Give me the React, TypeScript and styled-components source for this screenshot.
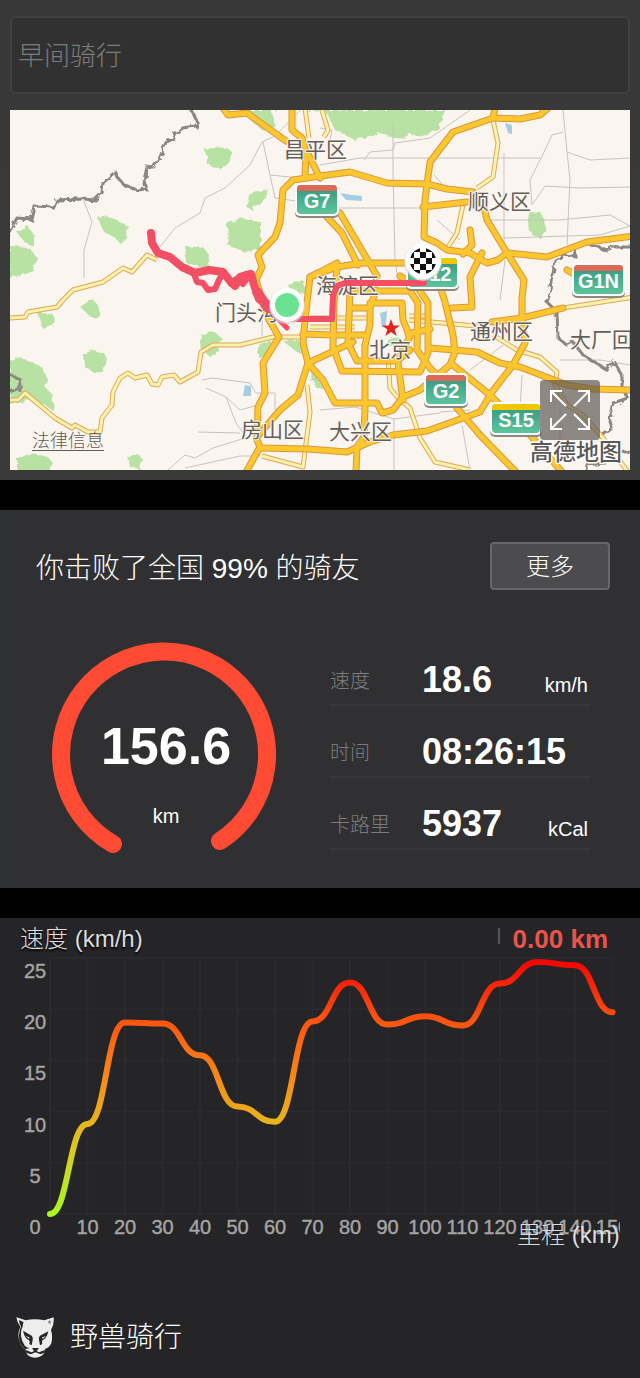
import React from "react";
import styled, { createGlobalStyle } from "styled-components";

const FONT = '"Liberation Sans", "Noto Sans CJK SC", sans-serif';

const GlobalStyle = createGlobalStyle`
  *, *::before, *::after { box-sizing: border-box; }
  body { margin: 0; background: #252426; font-family: ${FONT}; font-weight: 300; color: #fff; }
  h1, h2, p, dl, dd, dt { margin: 0; font-weight: 300; }
  input, button { font-family: inherit; font-weight: inherit; }
`;

const Page = styled.main`
  display: flex;
  flex-direction: column;
`;

const TopPanel = styled.section`
  display: flex;
  flex-direction: column;
  gap: 16px;
  padding: 16px 10px 10px;
  background: linear-gradient(#383838, #3a3a3a);
`;

const TitleInput = styled.input`
  width: 100%;
  height: 78px;
  padding: 0 6px 4px;
  border: 2px solid #404040;
  border-radius: 6px;
  background: #313131;
  color: #7c7c7c;
  font-size: 26px;
  outline: none;
`;

const MapFrame = styled.div`
  position: relative;
  display: flex;
`;

const Drawing = styled.svg`
  display: block;
  width: 100%;
  height: auto;
`;

const LegalLink = styled.a`
  position: absolute;
  left: 22px;
  bottom: 16px;
  font-size: 18px;
  line-height: 26px;
  color: #5e5b59;
  text-decoration: underline;
  text-underline-offset: 3px;
`;

const ExpandButton = styled.button`
  position: absolute;
  right: 30px;
  bottom: 30px;
  display: flex;
  align-items: center;
  justify-content: center;
  width: 60px;
  height: 60px;
  padding: 0;
  border: 0;
  border-radius: 4px;
  background: rgba(88, 84, 80, 0.68);
`;

const Divider = styled.div`
  height: 30px;
  background: #000;
`;

const StatsPanel = styled.section`
  padding: 32px 30px 38px 36px;
  background: linear-gradient(90deg, #2e3233, #303032 18px);
`;

const StatsHeader = styled.header`
  display: flex;
  align-items: center;
  justify-content: space-between;
  height: 48px;
`;

const Headline = styled.h1`
  padding-top: 6px;
  font-size: 28px;
  line-height: 42px;
`;

const MoreButton = styled.button`
  width: 120px;
  height: 48px;
  padding: 0 0 4px;
  border: 2px solid #676769;
  border-radius: 4px;
  background: #4c4c4e;
  color: #fff;
  font-size: 24px;
`;

const StatsBody = styled.div`
  display: flex;
  justify-content: space-between;
  margin-top: 44px;
  padding: 0 20px 0 16px;
`;

const Gauge = styled.div`
  position: relative;
  width: 224px;
  height: 208px;
  margin-top: 8px;
`;

const GaugeReadout = styled.p`
  position: absolute;
  inset: 0;
  display: flex;
  flex-direction: column;
  align-items: center;
  gap: 30px;
  padding: 74px 0 0 4px;
`;

const Distance = styled.strong`
  font-size: 52px;
  font-weight: 700;
  line-height: 60px;
`;

const Unit = styled.span`
  font-size: 20px;
  line-height: 20px;
`;

const Metrics = styled.dl`
  width: 260px;
`;

const Metric = styled.div`
  display: grid;
  grid-template-columns: 92px 1fr auto;
  align-items: baseline;
  height: 72px;
  padding: 24px 2px 0 0;
  border-bottom: 2px solid #38383a;
`;

const MetricLabel = styled.dt`
  padding-bottom: 2px;
  align-self: start;
  font-size: 20px;
  line-height: 46px;
  color: #7b7b7d;
`;

const MetricValue = styled.dd`
  font-size: 36px;
  font-weight: 700;
  line-height: 44px;
`;

const ChartPanel = styled.section`
  padding-right: 20px;
`;

const ChartHeader = styled.header`
  display: flex;
  align-items: center;
  justify-content: space-between;
  height: 38px;
  padding: 4px 12px 0 20px;
`;

const ChartTitle = styled.h2`
  font-size: 24px;
  line-height: 32px;
  color: #dcdcdc;
  text-shadow: 0 2px 2px #000;
`;

const Cursor = styled.output`
  display: flex;
  align-items: center;
  gap: 13px;
  font-size: 26px;
  font-weight: 700;
  line-height: 32px;
  color: #ea544a;

  &::before {
    content: "";
    width: 2px;
    height: 16px;
    margin-top: -6px;
    background: #565658;
  }
`;

const Footer = styled.footer`
  display: flex;
  align-items: center;
  gap: 16px;
  padding: 66px 16px 18px;
`;

const Brand = styled.p`
  font-size: 28px;
  line-height: 44px;
`;

const highways = [
  "M223 108L228 115L247 113L286 141",
  "M292 108V130L302 138L306 152L305 178",
  "M308 154L320 178",
  "M473 192L447 189L427 184L387 183L350 172L320 176L293 180L283 190L280 223L275 237L258 255L262 267L256 280L262 300L268 318L279 337L263 363L265 393L258 407L257 440L260 447L245 474",
  "M260 448L308 449L347 452L370 442L393 435L427 431L480 412L492 392L513 365L525 343L522 318V298L524 280L507 253L487 220L483 203",
  "M257 437L280 410L298 395L308 363L332 352L353 342",
  "M308 363L303 343L305 320L310 277L337 267L362 263L407 263",
  "M308 363L323 380L335 403L377 403L382 413L393 410L403 397L420 390L450 365L455 352L453 335L445 302L438 280",
  "M337 267L334 303L333 347L342 371L420 372L428 353V303L418 288L400 276",
  "M350 291H410L418 303L417 350L430 368L440 378",
  "M350 291L348 343L357 361H397L410 350",
  "M370 303H402L403 320L410 337L398 357M370 303V325L365 345",
  "M303 334L333 335H365M408 334L430 329",
  "M350 308H370L376 290",
  "M365 345V407L364 437L357 447L356 474",
  "M398 363L403 400",
  "M430 348L477 352L500 363L520 367L567 385L593 389L634 390",
  "M453 365L490 395L530 435L562 472",
  "M457 408L480 435L516 472",
  "M495 108L493 118L453 132L430 162L425 200L424 237L437 243L447 250L470 253L487 263L498 260L507 253L547 257L587 242L634 236",
  "M493 118L520 119L540 115L548 108",
  "M423 207L467 202",
  "M470 230L472 245L463 254",
  "M482 253L470 277L472 307L452 308",
  "M327 217L342 233L358 265",
  "M340 213L360 247L377 276",
  "M310 277L320 272L337 263",
  "M492 322L522 318L563 308",
  "M567 270L574 274",
];

const minorRoads = [
  "M157 260L147 255L132 272L123 268L103 282L73 290L63 300L57 307L28 312L25 317L8 318",
  "M8 400H18L25 393L55 418L72 428L75 425L88 432H100L102 418L112 405L113 392L120 378L128 373L135 378L147 375L152 384L158 385L162 377L174 375L180 382L198 372L201 352L213 345L240 345L273 337L303 337",
  "M307 385L310 412L303 467L262 456",
  "M388 357L390 388L398 398L410 408L420 438L435 462L470 470",
  "M493 120L498 143L493 177L477 188",
  "M463 205L457 233L448 247",
  "M493 335L517 350L540 357L557 372L555 385L567 405L583 415L603 438L628 472",
  "M310 318H372M310 327H355M409 320L487 327M409 316H428",
  "M563 308L634 297",
  "M305 108L309 138M322 110L328 130L324 137",
];

const tracks = [
  "M83 199L92 222L84 250L84 278",
  "M160 247L175 228L200 213L205 198L225 188L250 165L262 142L275 136L320 90",
  "M263 142L270 175L275 198L296 201M270 175L300 178",
  "M364 160L370 152L393 150L395 143L430 138L470 110",
  "M393 125V170L395 260L398 280M320 208H425M320 165L360 158H540M320 128L332 130L328 150",
  "M504 153V250M563 110L567 152L570 180L567 245M545 150L552 135L563 132M567 152L590 160L630 158",
  "M532 205L545 186L580 188L630 187M490 220H560L610 215L630 226M504 238L600 235L630 226M532 205L530 180L545 150",
  "M202 380L212 378L250 383L256 393H275V410M206 388L226 397L236 423L244 434M198 432L240 433M226 397L240 410L258 405",
  "M168 470L185 455L195 458L213 448L245 438M185 468L240 456L260 456",
  "M262 336V318M320 410L355 407L394 419L440 413M394 419V470M310 380L325 377",
  "M440 412L470 410M462 425L470 470M522 375L520 410M560 360H600L630 365M437 220L460 240M434 175L445 187",
  "M500 300L505 260M470 370L510 340M560 410L560 470",
];

const woods = [
  "M204 149L216 146L230 150L233 153L225 166L216 168L207 164L208 157Z",
  "M98 218L105 215L118 221L128 226L127 238L121 244L114 237L103 231Z",
  "M245 206L252 192L268 189L266 198L257 204L252 210Z",
  "M227 222L242 218L261 222V248L245 252L228 245Z",
  "M185 246L204 248L210 256L208 270L186 263Z",
  "M17 232L28 226L34 235V246L25 243Z",
  "M10 247L30 248L37 258L33 270L10 278Z",
  "M238 110H445L438 130L422 136L410 134L400 140L380 133L355 140L335 130L326 112L270 108L276 128L262 130L248 118Z",
  "M80 307L92 299L98 305L101 317H91Z",
  "M37 312L54 315L53 324L43 329Z",
  "M83 354L94 350L105 354L107 364L96 374L84 366Z",
  "M10 362L20 357L42 367L48 381L44 386L52 394L54 411L40 402L24 400L10 404Z",
  "M201 334L214 332L222 338L219 350L210 357L200 347Z",
  "M258 345L270 340L274 346L265 357H258Z",
  "M282 340L300 341L303 354L294 350Z",
  "M17 458L30 454L47 456L53 463L48 472H17Z",
  "M128 458L138 454L143 460L140 469L130 467Z",
  "M528 212L542 213L547 229L540 238L530 233Z",
  "M288 285L304 280V292L292 298Z",
  "M309 369L318 378L325 390L316 388Z",
  "M388 340L398 336L402 346H388Z",
];

const borders = [
  "M8 234L17 218L31 219L34 206L54 207L57 200L83 199L95 200L102 193L103 183L115 172L118 178L125 186L138 190L146 189L144 180L147 167L153 168L160 157L167 140L174 138L177 132L183 128L195 126L198 123L190 108",
  "M634 247L613 247L607 250L587 243L575 248L576 257L565 255L555 260L551 290L547 302L557 312L558 338L567 345L573 342L583 355L607 370L614 362L622 375V388L628 398L613 403L609 418L612 428L600 438M634 450L610 455L605 463L587 465L585 474",
  "M8 374L20 379L21 387L8 393",
];

const places = [
  { name: "昌平区", x: 284, y: 157 },
  { name: "顺义区", x: 468, y: 209 },
  { name: "海淀区", x: 316, y: 293 },
  { name: "门头沟区", x: 215, y: 320 },
  { name: "通州区", x: 470, y: 339 },
  { name: "北京", x: 369, y: 357 },
  { name: "大厂回", x: 570, y: 347 },
  { name: "房山区", x: 241, y: 437 },
  { name: "大兴区", x: 329, y: 439 },
];

const shields = [
  { label: "G7", x: 295, y: 183, w: 44, top: "#dd6a58" },
  { label: "G12", x: 406, y: 256, w: 53, top: "#f0c808" },
  { label: "G1N", x: 572, y: 263, w: 53, top: "#dd6a58" },
  { label: "G2", x: 424, y: 373, w: 44, top: "#dd6a58" },
  { label: "S15", x: 490, y: 402, w: 52, top: "#f0c808" },
];

function Shield({ label, x, y, w, top }: (typeof shields)[number]) {
  return (
    <g>
      <rect x={x} y={y + 2} width={w} height="33" rx="5" fill="#8d8880" />
      <rect x={x} y={y} width={w} height="33" rx="5" fill="#fff" />
      <rect x={x + 2} y={y + 2} width={w - 4} height="29" rx="4" fill="url(#shield)" />
      <path
        d={`M${x + 2} ${y + 8}v-2a4 4 0 0 1 4 -4h${w - 12}a4 4 0 0 1 4 4v2z`}
        fill={top}
      />
      <text x={x + w / 2} y={y + 25} fontSize="20" fontWeight="700" fill="#fff" textAnchor="middle">
        {label}
      </text>
    </g>
  );
}

function RouteMap() {
  return (
    <Drawing viewBox="10 110 620 360" role="img" aria-label="骑行路线">
      <defs>
        <linearGradient id="shield" x1="0" y1="0" x2="0" y2="1">
          <stop offset="0.2" stopColor="#3d9f82" />
          <stop offset="1" stopColor="#5cc49d" />
        </linearGradient>
        <filter id="rough" x="-5%" y="-5%" width="110%" height="110%">
          <feTurbulence type="fractalNoise" baseFrequency="0.16" numOctaves="2" seed="4" />
          <feDisplacementMap in="SourceGraphic" scale="6" />
        </filter>
        <clipPath id="flag">
          <circle cx="423" cy="261" r="13" />
        </clipPath>
      </defs>
      <rect x="10" y="110" width="620" height="360" fill="#fbf5ef" />
      <g fill="#b7e2a3" filter="url(#rough)">
        {woods.map((d) => <path key={d} d={d} />)}
      </g>
      <g fill="#a5cde3">
        <path d="M340 193L352 195L362 196V201L346 200Z" />
        <path d="M505 123L512 125V134L508 133Z" />
        <path d="M245 385L251 386V396H243Z" />
        <path d="M380 313L387 311L386 325L382 328Z" />
      </g>
      <g fill="none" stroke="#c9c3bd" strokeWidth="1">
        {tracks.map((d) => <path key={d} d={d} />)}
      </g>
      <g fill="none" stroke="#8b8681" strokeWidth="3" filter="url(#rough)">
        {borders.map((d) => <path key={d} d={d} />)}
      </g>
      <g fill="none" stroke="#dca85a" strokeWidth="5" strokeLinejoin="round">
        {minorRoads.map((d) => <path key={d} d={d} />)}
      </g>
      <g fill="none" stroke="#fdf2ab" strokeWidth="3" strokeLinejoin="round">
        {minorRoads.map((d) => <path key={d} d={d} />)}
      </g>
      <g fill="none" stroke="#d9983a" strokeWidth="7" strokeLinejoin="round" strokeLinecap="round">
        {highways.map((d) => <path key={d} d={d} />)}
      </g>
      <g fill="none" stroke="#fcc62f" strokeWidth="5" strokeLinejoin="round" strokeLinecap="round">
        {highways.map((d) => <path key={d} d={d} />)}
      </g>
      <g
        fontSize="21"
        fontWeight="400"
        fill="#625e5b"
        stroke="#fbf5ef"
        strokeWidth="2"
        strokeLinejoin="round"
        paintOrder="stroke"
      >
        {places.map((p) => (
          <text key={p.name} x={p.x} y={p.y}>{p.name}</text>
        ))}
      </g>
      <path
        d="M391 319L393.300 325.500H400L394.600 329.500L396.700 336L391 332L385.300 336L387.400 329.500L382 325.500H388.700Z"
        fill="#e0231c"
      />
      {shields.map((s) => <Shield key={s.label} {...s} />)}
      <g fill="none" stroke="#f34f64" strokeLinejoin="round" strokeLinecap="round">
        <path
          strokeWidth="8"
          d="M151 233L152 243L158 253L170 257L182 267L195 273L209 270L223 272L230 281L235 286L240 277L246 275L251 274L254 285L259 299L269 305"
        />
        <path strokeWidth="6" d="M194 274L197 282L203 283L208 290L215 289L219 280L223 273M231 284L236 279L243 284L249 276" />
        <path strokeWidth="10" d="M257 292L268 308" />
        <path strokeWidth="5" d="M268 308L287 328" />
        <path strokeWidth="6" d="M290 319L332 319L333 296L337 286L345 283H424" />
      </g>
      <circle cx="287" cy="306" r="18" fill="#d9d4cf" opacity="0.700" />
      <circle cx="287" cy="305" r="17" fill="#fff" />
      <circle cx="287" cy="305" r="12" fill="#6be291" />
      <circle cx="423" cy="262" r="19" fill="#d9d4cf" opacity="0.700" />
      <circle cx="423" cy="261" r="18" fill="#fff" />
      <g clipPath="url(#flag)" fill="#111">
        {[0, 1, 2, 3, 4].flatMap((row) =>
          [0, 1, 2, 3, 4]
            .filter((col) => (row + col) % 2 === 1)
            .map((col) => (
              <rect key={`${row}-${col}`} x={408 + col * 6} y={246 + row * 6} width="6" height="6" />
            )),
        )}
      </g>
      <text
        x="530"
        y="460"
        fontSize="23"
        fontWeight="500"
        fill="#5b5855"
        stroke="#fff"
        strokeWidth="3"
        strokeLinejoin="round"
        paintOrder="stroke"
      >
        高德地图
      </text>
    </Drawing>
  );
}

/** Speed in km/h sampled every 10 km. */
const speeds = [0, 8.8, 18.7, 18.6, 15.5, 10.5, 9, 18.8, 22.6, 18.5, 19.3, 18.4, 22.5, 24.6, 24.3, 19.7];
const px = (index: number) => 50 + index * 37.5;
const py = (speed: number) => 1214 - speed * 10.24;

const curve = speeds.reduce((d, speed, i) => {
  if (i === 0) return `M${px(0)} ${py(speed)}`;
  const mid = (px(i - 1) + px(i)) / 2;
  return `${d}C${mid} ${py(speeds[i - 1])} ${mid} ${py(speed)} ${px(i)} ${py(speed)}`;
}, "");

function SpeedChart() {
  return (
    <Drawing viewBox="0 956 620 294" role="img" aria-label="速度曲线">
      <defs>
        <linearGradient id="speed" gradientUnits="userSpaceOnUse" x1="0" y1="1214" x2="0" y2="960">
          <stop offset="0" stopColor="#aaf81b" />
          <stop offset="0.200" stopColor="#cfd622" />
          <stop offset="0.380" stopColor="#e9b01b" />
          <stop offset="0.600" stopColor="#fb7a18" />
          <stop offset="0.780" stopColor="#fb5010" />
          <stop offset="1" stopColor="#f40404" />
        </linearGradient>
      </defs>
      <g stroke="#2a2a2c" strokeWidth="2">
        {speeds.map((_, i) => <path key={i} d={`M${px(i)} 958V1214`} />)}
        {[0, 5, 10, 15, 20, 25].map((v) => <path key={v} d={`M50 ${py(v)}H612`} />)}
      </g>
      <g fontSize="20" fill="#a5a5a5" stroke="#a5a5a5" strokeWidth="0.400">
        {[5, 10, 15, 20, 25].map((v) => (
          <text key={v} x="35" y={py(v) + 20} textAnchor="middle">{v}</text>
        ))}
        {speeds.map((_, i) => (
          <text key={i} x={i === 0 ? 35 : px(i)} y="1234" textAnchor="middle">{i * 10}</text>
        ))}
      </g>
      <path d={curve} fill="none" stroke="url(#speed)" strokeWidth="6" strokeLinecap="round" />
      <text x="517" y="1243" fontSize="24" fill="#dcdcdc">里程 (km)</text>
    </Drawing>
  );
}

function BeastLogo() {
  return (
    <svg width="38" height="44" viewBox="49 80 114 132" aria-hidden="true">
      <path
        d="M50 84L78 93Q105 86 134 93L162 84Q164 106 154 122Q160 142 155 162Q150 174 136 179L134 190Q126 204 106 205Q86 204 80 190L77 179Q68 176 64 168Q54 150 57 128Q60 118 62 112Q52 100 50 84Z"
        fill="#ededed"
      />
      <g fill="#252426">
        <path d="M58 92L72 99Q68 106 69 112Q63 122 64 140Q66 156 76 170Q82 176 90 176L77 180Q64 172 59 156Q56 136 61 120L64 112Q58 102 58 92Z" />
        <path d="M152 92L144 97L152 106Q155 100 152 92Z" opacity="0.500" />
        <path d="M70 124L96 139Q101 144 99 152L96 168L89 164Q92 156 88 152Q76 150 70 124Z" />
        <path d="M146 126L121 139Q116 144 118 152L121 168L128 164Q125 156 129 152Q141 148 146 126Z" />
        <path d="M97 176H118L111 185L118 189L136 182L134 190L122 195L108 189L93 195L80 190L78 182L96 189L103 185Z" />
      </g>
      <path d="M78 139L91 145L87 148ZM139 139L126 145L130 148Z" fill="#ededed" />
    </svg>
  );
}

const metrics = [
  { label: "速度", value: "18.6", unit: "km/h" },
  { label: "时间", value: "08:26:15", unit: "" },
  { label: "卡路里", value: "5937", unit: "kCal" },
];

export default function App() {
  return (
    <Page>
      <GlobalStyle />
      <TopPanel>
        <TitleInput type="text" defaultValue="早间骑行" aria-label="骑行标题" />
        <MapFrame>
          <RouteMap />
          <LegalLink href="#legal">法律信息</LegalLink>
          <ExpandButton type="button" aria-label="展开地图">
            <svg width="42" height="42" viewBox="0 0 42 42" fill="none" stroke="#fff" strokeWidth="2">
              <path d="M2 13V2H13M2 2L17 17M29 2H40V13M40 2L25 17M2 29V40H13M2 40L17 25M40 29V40H29M40 40L25 25" />
            </svg>
          </ExpandButton>
        </MapFrame>
      </TopPanel>
      <Divider />
      <StatsPanel>
        <StatsHeader>
          <Headline>你击败了全国 99% 的骑友</Headline>
          <MoreButton type="button">更多</MoreButton>
        </StatsHeader>
        <StatsBody>
          <Gauge>
            <svg width="224" height="216" viewBox="0 0 224 216" aria-hidden="true">
              <path
                d="M61 202A103 103 0 1 1 168 199"
                fill="none"
                stroke="#ff4b33"
                strokeWidth="18"
                strokeLinecap="round"
              />
            </svg>
            <GaugeReadout>
              <Distance>156.6</Distance>
              <Unit>km</Unit>
            </GaugeReadout>
          </Gauge>
          <Metrics>
            {metrics.map((m) => (
              <Metric key={m.label}>
                <MetricLabel>{m.label}</MetricLabel>
                <MetricValue>{m.value}</MetricValue>
                {m.unit && <Unit as="dd">{m.unit}</Unit>}
              </Metric>
            ))}
          </Metrics>
        </StatsBody>
      </StatsPanel>
      <Divider />
      <ChartPanel>
        <ChartHeader>
          <ChartTitle>速度 (km/h)</ChartTitle>
          <Cursor>0.00 km</Cursor>
        </ChartHeader>
        <SpeedChart />
      </ChartPanel>
      <Footer>
        <BeastLogo />
        <Brand>野兽骑行</Brand>
      </Footer>
    </Page>
  );
}
